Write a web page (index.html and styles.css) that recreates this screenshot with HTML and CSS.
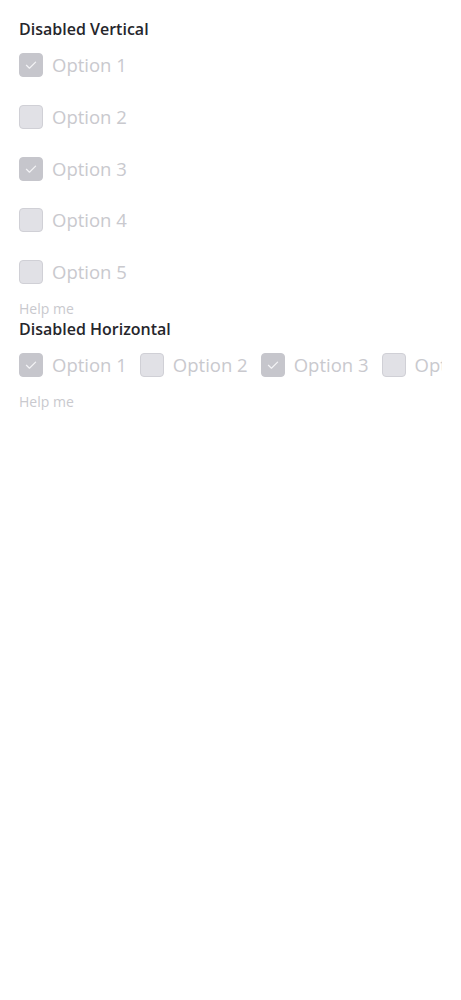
FILE: index.html
```html
<!DOCTYPE html>
<html>
<head>
<meta charset="utf-8">
<link rel="stylesheet" href="styles.css">
</head>
<body>
<div class="page">
  <section class="field">
    <div class="title">Disabled Vertical</div>
    <div class="group vertical">
      <label class="item"><span class="box checked"><svg viewBox="0 0 24 24"><path d="M7 12.3l3.3 3.2 6.7-6.6"/></svg></span><span class="label">Option 1</span></label>
      <label class="item"><span class="box"></span><span class="label">Option 2</span></label>
      <label class="item"><span class="box checked"><svg viewBox="0 0 24 24"><path d="M7 12.3l3.3 3.2 6.7-6.6"/></svg></span><span class="label">Option 3</span></label>
      <label class="item"><span class="box"></span><span class="label">Option 4</span></label>
      <label class="item"><span class="box"></span><span class="label">Option 5</span></label>
    </div>
    <div class="help">Help me</div>
  </section>
  <section class="field">
    <div class="title">Disabled Horizontal</div>
    <div class="group horizontal">
      <label class="item"><span class="box checked"><svg viewBox="0 0 24 24"><path d="M7 12.3l3.3 3.2 6.7-6.6"/></svg></span><span class="label">Option 1</span></label>
      <label class="item"><span class="box"></span><span class="label">Option 2</span></label>
      <label class="item"><span class="box checked"><svg viewBox="0 0 24 24"><path d="M7 12.3l3.3 3.2 6.7-6.6"/></svg></span><span class="label">Option 3</span></label>
      <label class="item"><span class="box"></span><span class="label">Option 4</span></label>
    </div>
    <div class="help">Help me</div>
  </section>
</div>
</body>
</html>
```
FILE: styles.css
```css
html, body {
  margin: 0;
  padding: 0;
  background: #ffffff;
}
body {
  font-family: "Open Sans", "Noto Sans", sans-serif;
}
.page {
  padding: 18px 19px 0 19px;
  overflow: hidden;
}
.field {
  display: flex;
  flex-direction: column;
}
.field + .field {
  margin-top: 1px;
}
.title {
  font-size: 16px;
  font-weight: 600;
  line-height: 22px;
  color: #26262b;
  margin-bottom: 13px;
}
.group {
  display: flex;
}
.group.vertical {
  flex-direction: column;
  gap: 27.75px;
}
.group.horizontal {
  flex-direction: row;
  gap: 13px;
  overflow: hidden;
  white-space: nowrap;
}
.item {
  display: flex;
  align-items: center;
  gap: 9px;
  height: 24px;
  flex-shrink: 0;
}
.box {
  width: 24px;
  height: 24px;
  box-sizing: border-box;
  border-radius: 4px;
  background: #e1e1e6;
  border: 1px solid #d0d0d6;
  display: flex;
  align-items: center;
  justify-content: center;
  flex-shrink: 0;
}
.box.checked {
  background: #c6c6cc;
  border-color: #c6c6cc;
}
.box svg {
  width: 24px;
  height: 24px;
  fill: none;
  stroke: #f4f4f6;
  stroke-width: 1.3;
  stroke-linecap: round;
  stroke-linejoin: round;
}
.label {
  font-size: 18.5px;
  line-height: 24px;
  color: #c9c9ce;
}
.help {
  margin-top: 17px;
  font-size: 14px;
  line-height: 16px;
  color: #c9c9ce;
}
```
